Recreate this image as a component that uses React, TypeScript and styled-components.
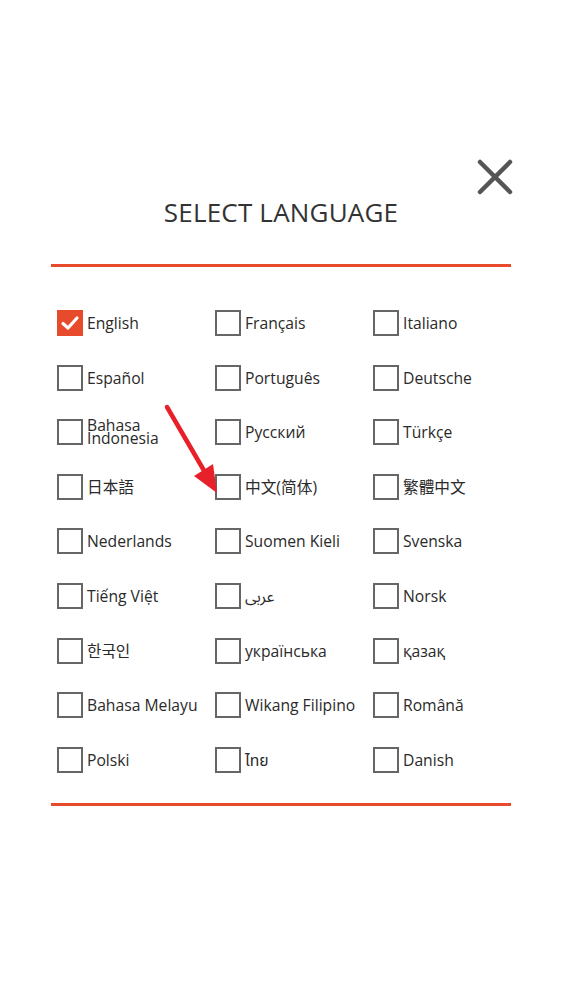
import React from "react";
import styled, { createGlobalStyle } from "styled-components";

const Global = createGlobalStyle`
  html, body { margin: 0; padding: 0; background: #ffffff; }
  body { font-family: "Open Sans", "Noto Sans", "Noto Sans CJK SC", sans-serif; }
  * { box-sizing: border-box; }
`;

const Page = styled.div`
  position: relative;
  width: 562px;
  min-height: 999px;
  background: #fff;
`;

const Panel = styled.div`
  width: 460px;
  margin: 0 auto;
  padding-top: 159px;
  display: flex;
  flex-direction: column;
`;

const CloseRow = styled.div`
  display: flex;
  justify-content: flex-end;
  height: 36px;
`;

const CloseButton = styled.button`
  width: 36px;
  height: 36px;
  padding: 0;
  border: none;
  background: transparent;
  display: flex;
  align-items: center;
  justify-content: center;
  margin-right: -2px;
`;

const Title = styled.h1`
  margin: 0;
  padding-top: 2px;
  text-align: center;
  font-family: "Open Sans", sans-serif;
  font-weight: 400;
  font-size: 26px;
  line-height: 31px;
  color: #333;
  letter-spacing: 0.2px;
`;

const Rule = styled.div<{ $top: number }>`
  height: 3px;
  background: #e84a2c;
  margin-top: ${(p) => p.$top}px;
`;

const Grid = styled.div`
  display: grid;
  grid-template-columns: 158px 158px 144px;
  grid-auto-rows: 26px;
  row-gap: 28.6px;
  padding: 43px 0 0 6px;
  margin-bottom: 30px;
`;

const Item = styled.label`
  display: flex;
  align-items: center;
  gap: 4px;
  cursor: pointer;
`;

const Box = styled.span<{ $checked?: boolean }>`
  flex: 0 0 auto;
  width: 26px;
  height: 26px;
  border: ${(p) => (p.$checked ? "none" : "2px solid #666")};
  background: ${(p) => (p.$checked ? "#e84a2c" : "#fff")};
  display: flex;
  align-items: center;
  justify-content: center;
`;

const Label = styled.span<{ $wrap?: boolean }>`
  font-family: "Open Sans", "Noto Sans", "Noto Sans CJK SC", "Noto Sans CJK KR", "Noto Sans Arabic", "Noto Sans Thai", sans-serif;
  font-size: 15.7px;
  font-weight: 400;
  color: #2a2a2a;
  white-space: ${(p) => (p.$wrap ? "pre-line" : "nowrap")};
  line-height: ${(p) => (p.$wrap ? "13px" : "20px")};
`;

const Arrow = styled.svg`
  position: absolute;
  left: 0;
  top: 0;
  pointer-events: none;
`;

const languages: { name: string; checked?: boolean; wrap?: boolean }[] = [
  { name: "English", checked: true },
  { name: "Français" },
  { name: "Italiano" },
  { name: "Español" },
  { name: "Português" },
  { name: "Deutsche" },
  { name: "Bahasa\nIndonesia", wrap: true },
  { name: "Русский" },
  { name: "Türkçe" },
  { name: "日本語" },
  { name: "中文(简体)" },
  { name: "繁體中文" },
  { name: "Nederlands" },
  { name: "Suomen Kieli" },
  { name: "Svenska" },
  { name: "Tiếng Việt" },
  { name: "عربى" },
  { name: "Norsk" },
  { name: "한국인" },
  { name: "українська" },
  { name: "қазақ" },
  { name: "Bahasa Melayu" },
  { name: "Wikang Filipino" },
  { name: "Română" },
  { name: "Polski" },
  { name: "ไทย" },
  { name: "Danish" },
];

export default function App() {
  return (
    <Page>
      <Global />
      <Panel>
        <CloseRow>
          <CloseButton aria-label="Close">
            <svg width="36" height="36" viewBox="0 0 36 36">
              <path d="M3 3 L33 33 M33 3 L3 33" stroke="#555" strokeWidth="4.5" strokeLinecap="round" fill="none" />
            </svg>
          </CloseButton>
        </CloseRow>
        <Title>SELECT LANGUAGE</Title>
        <Rule $top={36} />
        <Grid>
          {languages.map((l) => (
            <Item key={l.name}>
              <Box $checked={l.checked}>
                {l.checked && (
                  <svg width="20" height="16" viewBox="0 0 20 16">
                    <path d="M3 8.5 L8 13 L17 3" stroke="#fff" strokeWidth="3.2" strokeLinecap="round" strokeLinejoin="round" fill="none" />
                  </svg>
                )}
              </Box>
              <Label $wrap={l.wrap}>{l.name}</Label>
            </Item>
          ))}
        </Grid>
        <Rule $top={0} />
      </Panel>
      <Arrow width="562" height="999" viewBox="0 0 562 999">
        <line x1="167" y1="407" x2="206" y2="474" stroke="#e8202a" strokeWidth="4.5" strokeLinecap="round" />
        <polygon points="217,493 194,476 213,464" fill="#e8202a" />
      </Arrow>
    </Page>
  );
}
